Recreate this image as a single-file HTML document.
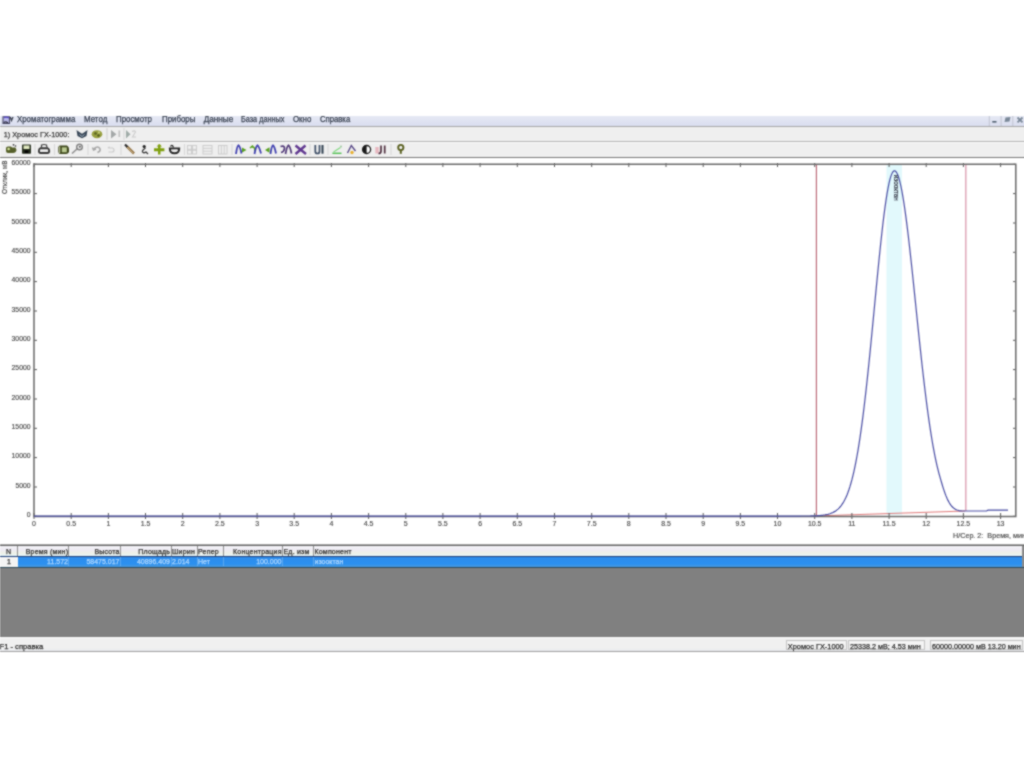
<!DOCTYPE html>
<html><head><meta charset="utf-8">
<style>
html,body{margin:0;padding:0;}
body{width:1024px;height:767px;background:#fff;position:relative;overflow:hidden;font-family:"Liberation Sans",sans-serif;}
#w{position:absolute;left:0;top:0;width:1024px;height:767px;filter:url(#bl);}
.a{position:absolute;}
.t{position:absolute;white-space:nowrap;font-size:8px;color:#303030;line-height:10px;-webkit-text-stroke:0.25px currentColor;}
svg text{stroke:currentColor;stroke-width:0.15px;fill:currentColor}
</style></head><body><svg width="0" height="0" style="position:absolute"><filter id="bl" x="0" y="0" width="1" height="1" color-interpolation-filters="sRGB"><feConvolveMatrix order="3" kernelMatrix="1 2 1 2 8 2 1 2 1" divisor="20" edgeMode="duplicate"/></filter></svg><div id="w">
<div class="a" style="left:0;top:116px;width:1024px;height:10px;background:linear-gradient(#e6e9f4,#d9ddef);"></div>
<div class="a" style="left:0;top:126px;width:1024px;height:1px;background:#a8a8a8;"></div>
<div class="a" style="left:0;top:127px;width:1024px;height:14px;background:#efefef;"></div>
<div class="a" style="left:0;top:141px;width:1024px;height:1px;background:#b4b4b4;"></div>
<div class="a" style="left:0;top:142px;width:1024px;height:1px;background:#fafafa;"></div>
<div class="a" style="left:0;top:143px;width:1024px;height:14px;background:#efefef;"></div>
<div class="a" style="left:0;top:157px;width:1024px;height:1px;background:#7a7a7a;"></div>
<div class="t" style="left:17px;top:115.3px;font-size:8.2px;line-height:10px;color:#384050;transform:scaleX(0.96);transform-origin:0 0">Хроматограмма</div><div class="t" style="left:84.4px;top:115.3px;font-size:8.2px;line-height:10px;color:#384050;transform:scaleX(0.97);transform-origin:0 0">Метод</div><div class="t" style="left:115.9px;top:115.3px;font-size:8.2px;line-height:10px;color:#384050;transform:scaleX(0.96);transform-origin:0 0">Просмотр</div><div class="t" style="left:162px;top:115.3px;font-size:8.2px;line-height:10px;color:#384050;transform:scaleX(0.96);transform-origin:0 0">Приборы</div><div class="t" style="left:203.7px;top:115.3px;font-size:8.2px;line-height:10px;color:#384050;transform:scaleX(1.0);transform-origin:0 0">Данные</div><div class="t" style="left:241.1px;top:115.3px;font-size:8.2px;line-height:10px;color:#384050;transform:scaleX(0.89);transform-origin:0 0">База данных</div><div class="t" style="left:293px;top:115.3px;font-size:8.2px;line-height:10px;color:#384050;transform:scaleX(0.96);transform-origin:0 0">Окно</div><div class="t" style="left:320.2px;top:115.3px;font-size:8.2px;line-height:10px;color:#384050;transform:scaleX(0.94);transform-origin:0 0">Справка</div>
<div class="t" style="left:3.7px;top:129.5px;font-size:7.3px;color:#404040">1) Хромос ГХ-1000:</div>
<svg class="a" style="left:0;top:0" width="1024" height="160" viewBox="0 0 1024 160">
<!-- app icon -->
<path d="M3,116.8 L9.5,116.8 L9.5,123.5 L3,123.5 Z" fill="#b8b8e8" stroke="#4a4a68" stroke-width="1.1"/>
<path d="M4,117.5 Q6.5,116.5 9,118" stroke="#5848c8" stroke-width="1.4" fill="none"/>
<path d="M3.5,122.5 Q6,121 8,123" stroke="#303040" stroke-width="1.2" fill="none"/>
<path d="M10.3,117 L11.5,120.5 L13,117" stroke="#3a4050" stroke-width="1.3" fill="none"/>
<!-- MDI buttons -->
<rect x="988.8" y="116" width="1" height="10" fill="#c0c4d0"/>
<rect x="992.3" y="121" width="4.2" height="1.6" fill="#506070"/>
<rect x="1000.6" y="116" width="1" height="10" fill="#c0c4d0"/>
<path d="M1005.5,117.5 L1010.5,117 L1009.5,121.5 L1004.5,122 Z" fill="#7a8898"/>
<rect x="1012.3" y="116" width="1" height="10" fill="#c0c4d0"/>
<path d="M1017.5,117.5 L1022.5,122.3 M1022.5,117.5 L1017.5,122.3" stroke="#7a8898" stroke-width="1.8"/>
<!-- toolbar1 icons -->
<path d="M76.5,130 L80,132.5 L82,133.8 L84,132.5 L87.5,130 L86.5,136 L82,138.2 L77.5,136 Z" fill="#3a4858"/>
<path d="M79.5,134.5 L82,136.5 L84.5,134.5" stroke="#b8c8d8" stroke-width="0.8" fill="none"/>
<ellipse cx="97" cy="134.2" rx="5.3" ry="4" fill="#98a040"/><circle cx="95.5" cy="133.5" r="1.3" fill="#586020"/><circle cx="98.5" cy="135.5" r="1.2" fill="#505818"/><circle cx="99" cy="132.5" r="0.9" fill="#d0d890"/>
<rect x="106.5" y="128" width="1" height="12" fill="#d0d0d0"/>
<path d="M111,130 L116.5,134.3 L111,138.5 Z" fill="#a4a8a8"/><rect x="118.5" y="130.5" width="1.6" height="6.5" fill="#c0c0c0"/>
<rect x="123.5" y="128" width="1" height="12" fill="#d8d8d8"/>
<path d="M126,130 L130.5,134.3 L126,138.5 Z" fill="#a0aca8"/><path d="M132,131.5 Q135,130 135.5,132 L132.5,137 L136,137" stroke="#cccccc" stroke-width="1.1" fill="none"/>
<!-- toolbar2 icons -->
<path d="M6,148 Q6,146.5 8,146.5 L11,146.5 L12,147.5 L15.5,147.5 L16.5,150 Q16,153 13,153 L8,153 Q6,153 6,151 Z" fill="#56602a"/><circle cx="8.6" cy="149" r="1.3" fill="#d8e8a0"/><circle cx="13.5" cy="144.8" r="0.9" fill="#404040"/><circle cx="15.5" cy="146" r="0.8" fill="#303030"/>
<rect x="22" y="144.5" width="9" height="9.2" rx="0.8" fill="#283020"/><rect x="23.5" y="145.5" width="6" height="3.5" fill="#e0e8c0"/><rect x="24.5" y="150.5" width="4" height="2.5" fill="#000"/>
<rect x="34.5" y="144" width="1" height="11" fill="#d8d8d8"/>
<path d="M41.5,147.5 L41.5,145 Q44,144 46.5,145 L47,147.5" stroke="#404040" stroke-width="1.2" fill="none"/>
<path d="M40.2,148.3 L47.8,148.3 Q49.2,148.8 49.2,151 Q49.2,153 47.3,153 L40.7,153 Q38.9,153 38.9,151 Q38.9,148.8 40.2,148.3 Z" fill="none" stroke="#383838" stroke-width="1.9"/>
<rect x="40.5" y="150.5" width="7" height="0.9" fill="#e8e8e8"/>
<rect x="54" y="144" width="1" height="11" fill="#d8d8d8"/>
<path d="M60,145.5 L67,145.5 Q69,146.5 69,149 L69,152 Q68,154 66,154 L60,154 Q58.3,153.5 58.3,151.5 L58.3,147.5 Q58.5,145.5 60,145.5 Z" fill="#3c461a"/><rect x="61.8" y="147.3" width="5" height="5" fill="#b8c890"/><rect x="59.2" y="146.5" width="1" height="6.5" fill="#d0d8b0"/>
<path d="M72,153.5 L77.5,148.5" stroke="#909090" stroke-width="1.6"/><circle cx="79.5" cy="147" r="2.8" fill="none" stroke="#808080" stroke-width="1.4"/><circle cx="79.8" cy="146.8" r="1" fill="#606060"/>
<rect x="87.5" y="144" width="1" height="11" fill="#d8d8d8"/>
<path d="M92.5,147.5 L93.5,150 L96,149 M93.5,149.5 Q96,146 99,147.5 Q101,149 99.5,151.5 L97.5,152.5" stroke="#a8a8a8" stroke-width="1.5" fill="none"/>
<path d="M108,148 L112.5,148 Q114,148.5 114,150 Q114,152 112,152 L108.5,152 M108,148 L109.5,146.8" stroke="#cccccc" stroke-width="1.2" fill="none"/>
<rect x="120.5" y="144" width="1" height="11" fill="#d8d8d8"/>
<path d="M127,146.5 L134,153.5" stroke="#9a7c50" stroke-width="2.6"/><path d="M125,144.5 L127.5,147" stroke="#282828" stroke-width="2.2"/><path d="M127,147 L133,153" stroke="#d8c090" stroke-width="0.6"/>
<circle cx="144.2" cy="146.5" r="1.6" fill="#202020"/><path d="M145.5,148 Q142,150 142.5,152 Q143.5,153.5 146,152 L148,154" stroke="#383838" stroke-width="1.3" fill="none"/>
<path d="M158,144.7 L160.5,144.7 L160.5,148.3 L164.4,148.3 L164.4,151.2 L160.5,151.2 L160.5,154.6 L158,154.6 L158,151.2 L154,151.2 L154,148.3 L158,148.3 Z" fill="#80a010"/><path d="M156.5,146.5 L159.2,144 L162,146.5 Z" fill="#80a010"/>
<path d="M169.8,148.5 Q169.8,153.3 174.5,153.3 Q179.2,153.3 179.2,148.5 Z" fill="none" stroke="#282828" stroke-width="1.9"/><path d="M170.5,146.5 Q171,145 172.5,145.5 L173.5,147.5" stroke="#303030" stroke-width="1.3" fill="none"/><path d="M171.5,150 L177,149.5" stroke="#d0d0d0" stroke-width="0.8"/>
<rect x="184" y="144" width="1" height="11" fill="#d8d8d8"/>
<g stroke="#cacaca" stroke-width="0.9" fill="none">
<rect x="187.5" y="145.5" width="9" height="8.5"/><path d="M191.5,145.5 V154 M192.5,145.5 V154 M187.5,149.3 H196.5 M187.5,150.3 H196.5"/>
<rect x="203" y="145.5" width="9" height="8.5"/><path d="M203,148.3 H212 M203,151.2 H212"/>
<rect x="218.5" y="145.5" width="8.5" height="8.5"/><path d="M221.3,145.5 V154 M224.2,145.5 V154"/>
</g>
<rect x="231.5" y="144" width="1" height="11" fill="#d8d8d8"/>
<path d="M236,154 Q237,146 238.5,145.2 Q240,146 241.5,153.5" stroke="#4040b0" stroke-width="1.8" fill="none"/><path d="M242,147.5 L246.5,150 L242,152.5 Z" fill="#58a020"/>
<path d="M250,148 L253,145.5 M251,147 Q255,146 255,151" stroke="#58a020" stroke-width="1.6" fill="none"/><path d="M254.5,154 Q256,146 257.5,145.2 Q259,146 261,153.5" stroke="#4040b0" stroke-width="1.8" fill="none"/>
<path d="M265,150 L269.5,147.3 L269.5,152.7 Z" fill="#58a020"/><path d="M270.5,154 Q271.5,146 273,145.2 Q274.5,146 276,153.5" stroke="#4040b0" stroke-width="1.8" fill="none"/>
<path d="M280.5,146.5 Q284.5,145 284.5,148.5 Q284,152 281,152.5 M285.5,154 Q287,146 288.5,145.2 Q290,146 291.5,153.5" stroke="#503878" stroke-width="1.7" fill="none"/>
<path d="M295.5,145.5 L306,154 M305.5,145.5 L295.5,154" stroke="#603890" stroke-width="2.4"/>
<rect x="309.5" y="144" width="1" height="11" fill="#d8d8d8"/>
<path d="M315.3,145 L315.3,151.5 Q315.3,153.5 317.5,153.5 Q319.5,153.5 319.5,151.5 L319.5,145" stroke="#405068" stroke-width="1.7" fill="none"/><path d="M322.5,145 V153.7" stroke="#304050" stroke-width="2"/>
<rect x="327.5" y="144" width="1" height="11" fill="#d8d8d8"/>
<path d="M332.4,153.3 L341.5,153.3" stroke="#50c050" stroke-width="1.4"/><path d="M333.5,152 L340.5,147.5" stroke="#80d880" stroke-width="1.1"/><circle cx="341" cy="146.5" r="1" fill="#a0c8a0"/>
<path d="M347.5,153 L351.3,145.5 L355.5,151" stroke="#5a4a88" stroke-width="1.4" fill="none"/><circle cx="352" cy="152.5" r="1.7" fill="#e8b030"/>
<circle cx="366.6" cy="149.5" r="4" fill="#ffffff" stroke="#181818" stroke-width="1.3"/><path d="M366.6,145.5 A4,4 0 0 0 366.6,153.5 Z" fill="#181818"/>
<rect x="375.3" y="147" width="3.5" height="6.5" fill="#e8b8c0"/><path d="M378.5,153.5 Q381,153.5 381,151 L381,145.5 M384.7,145.5 V153.5" stroke="#503040" stroke-width="1.7" fill="none"/>
<rect x="390.5" y="144" width="1" height="11" fill="#d8d8d8"/>
<circle cx="400.8" cy="147.5" r="2.6" fill="none" stroke="#5a6020" stroke-width="1.9"/><path d="M400.8,150 V153.8" stroke="#5a6020" stroke-width="2"/>
</svg>

<svg class="a" style="left:0;top:0" width="1024" height="767" viewBox="0 0 1024 767">
<rect x="886.5" y="165" width="15.5" height="350" fill="#e2f9fc"/>
<line x1="816.4" y1="165" x2="816.4" y2="516" stroke="#b86070" stroke-width="1.1"/>
<line x1="965.8" y1="165" x2="965.8" y2="511" stroke="#e0a8ba" stroke-width="1.5"/>
<path d="M815,516 L965,511" stroke="#e07a7a" stroke-width="1.1" fill="none"/>
<g stroke="#5a5a5a" stroke-width="1"><line x1="34" y1="516.3" x2="37" y2="516.3"/><line x1="1013" y1="516.3" x2="1016" y2="516.3"/><line x1="34" y1="487.0" x2="37" y2="487.0"/><line x1="1013" y1="487.0" x2="1016" y2="487.0"/><line x1="34" y1="457.6" x2="37" y2="457.6"/><line x1="1013" y1="457.6" x2="1016" y2="457.6"/><line x1="34" y1="428.3" x2="37" y2="428.3"/><line x1="1013" y1="428.3" x2="1016" y2="428.3"/><line x1="34" y1="399.0" x2="37" y2="399.0"/><line x1="1013" y1="399.0" x2="1016" y2="399.0"/><line x1="34" y1="369.6" x2="37" y2="369.6"/><line x1="1013" y1="369.6" x2="1016" y2="369.6"/><line x1="34" y1="340.3" x2="37" y2="340.3"/><line x1="1013" y1="340.3" x2="1016" y2="340.3"/><line x1="34" y1="311.0" x2="37" y2="311.0"/><line x1="1013" y1="311.0" x2="1016" y2="311.0"/><line x1="34" y1="281.6" x2="37" y2="281.6"/><line x1="1013" y1="281.6" x2="1016" y2="281.6"/><line x1="34" y1="252.3" x2="37" y2="252.3"/><line x1="1013" y1="252.3" x2="1016" y2="252.3"/><line x1="34" y1="223.0" x2="37" y2="223.0"/><line x1="1013" y1="223.0" x2="1016" y2="223.0"/><line x1="34" y1="193.6" x2="37" y2="193.6"/><line x1="1013" y1="193.6" x2="1016" y2="193.6"/><line x1="34" y1="164.3" x2="37" y2="164.3"/><line x1="1013" y1="164.3" x2="1016" y2="164.3"/><line x1="34.0" y1="513" x2="34.0" y2="519"/><line x1="34.0" y1="163" x2="34.0" y2="167"/><line x1="71.2" y1="513" x2="71.2" y2="519"/><line x1="71.2" y1="163" x2="71.2" y2="167"/><line x1="108.4" y1="513" x2="108.4" y2="519"/><line x1="108.4" y1="163" x2="108.4" y2="167"/><line x1="145.5" y1="513" x2="145.5" y2="519"/><line x1="145.5" y1="163" x2="145.5" y2="167"/><line x1="182.7" y1="513" x2="182.7" y2="519"/><line x1="182.7" y1="163" x2="182.7" y2="167"/><line x1="219.9" y1="513" x2="219.9" y2="519"/><line x1="219.9" y1="163" x2="219.9" y2="167"/><line x1="257.1" y1="513" x2="257.1" y2="519"/><line x1="257.1" y1="163" x2="257.1" y2="167"/><line x1="294.2" y1="513" x2="294.2" y2="519"/><line x1="294.2" y1="163" x2="294.2" y2="167"/><line x1="331.4" y1="513" x2="331.4" y2="519"/><line x1="331.4" y1="163" x2="331.4" y2="167"/><line x1="368.6" y1="513" x2="368.6" y2="519"/><line x1="368.6" y1="163" x2="368.6" y2="167"/><line x1="405.8" y1="513" x2="405.8" y2="519"/><line x1="405.8" y1="163" x2="405.8" y2="167"/><line x1="442.9" y1="513" x2="442.9" y2="519"/><line x1="442.9" y1="163" x2="442.9" y2="167"/><line x1="480.1" y1="513" x2="480.1" y2="519"/><line x1="480.1" y1="163" x2="480.1" y2="167"/><line x1="517.3" y1="513" x2="517.3" y2="519"/><line x1="517.3" y1="163" x2="517.3" y2="167"/><line x1="554.5" y1="513" x2="554.5" y2="519"/><line x1="554.5" y1="163" x2="554.5" y2="167"/><line x1="591.7" y1="513" x2="591.7" y2="519"/><line x1="591.7" y1="163" x2="591.7" y2="167"/><line x1="628.8" y1="513" x2="628.8" y2="519"/><line x1="628.8" y1="163" x2="628.8" y2="167"/><line x1="666.0" y1="513" x2="666.0" y2="519"/><line x1="666.0" y1="163" x2="666.0" y2="167"/><line x1="703.2" y1="513" x2="703.2" y2="519"/><line x1="703.2" y1="163" x2="703.2" y2="167"/><line x1="740.4" y1="513" x2="740.4" y2="519"/><line x1="740.4" y1="163" x2="740.4" y2="167"/><line x1="777.5" y1="513" x2="777.5" y2="519"/><line x1="777.5" y1="163" x2="777.5" y2="167"/><line x1="814.7" y1="513" x2="814.7" y2="519"/><line x1="814.7" y1="163" x2="814.7" y2="167"/><line x1="851.9" y1="513" x2="851.9" y2="519"/><line x1="851.9" y1="163" x2="851.9" y2="167"/><line x1="889.1" y1="513" x2="889.1" y2="519"/><line x1="889.1" y1="163" x2="889.1" y2="167"/><line x1="926.2" y1="513" x2="926.2" y2="519"/><line x1="926.2" y1="163" x2="926.2" y2="167"/><line x1="963.4" y1="513" x2="963.4" y2="519"/><line x1="963.4" y1="163" x2="963.4" y2="167"/><line x1="1000.6" y1="513" x2="1000.6" y2="519"/><line x1="1000.6" y1="163" x2="1000.6" y2="167"/></g>
<path d="M34,164.3 H1015.8 V516.5 H34 Z" stroke="#6a6a6a" stroke-width="1.5" fill="none"/>
<path d="M34.0,516.2 L800.0,516.2 L800.0,516.0 L801.0,516.0 L802.0,516.0 L803.0,516.0 L804.0,516.0 L805.0,516.0 L806.0,516.0 L807.0,516.0 L808.0,516.0 L809.0,516.0 L810.0,516.0 L811.0,515.9 L812.0,515.9 L813.0,515.9 L814.0,515.9 L815.0,515.9 L816.0,515.8 L817.0,515.8 L818.0,515.7 L819.0,515.6 L820.0,515.5 L821.0,515.4 L822.0,515.3 L823.0,515.2 L824.0,515.0 L825.0,514.9 L826.0,514.7 L827.0,514.5 L828.0,514.3 L829.0,514.0 L830.0,513.7 L831.0,513.3 L832.0,512.9 L833.0,512.5 L834.0,511.9 L835.0,511.4 L836.0,510.7 L837.0,509.9 L838.0,509.1 L839.0,508.1 L840.0,507.0 L841.0,505.8 L842.0,504.4 L843.0,502.9 L844.0,501.2 L845.0,499.3 L846.0,497.2 L847.0,494.9 L848.0,492.3 L849.0,489.5 L850.0,486.4 L851.0,483.0 L852.0,479.4 L853.0,475.4 L854.0,471.1 L855.0,466.4 L856.0,461.4 L857.0,456.0 L858.0,450.3 L859.0,444.1 L860.0,437.6 L861.0,430.7 L862.0,423.4 L863.0,415.8 L864.0,407.7 L865.0,399.3 L866.0,390.6 L867.0,381.5 L868.0,372.1 L869.0,362.5 L870.0,352.6 L871.0,342.5 L872.0,332.3 L873.0,321.9 L874.0,311.5 L875.0,301.0 L876.0,290.6 L877.0,280.2 L878.0,270.0 L879.0,260.0 L880.0,250.2 L881.0,240.7 L882.0,231.7 L883.0,223.0 L884.0,214.9 L885.0,207.3 L886.0,200.3 L887.0,193.9 L888.0,188.3 L889.0,183.4 L890.0,179.2 L891.0,175.9 L892.0,173.4 L893.0,171.7 L894.0,170.9 L895.0,170.9 L896.0,171.7 L897.0,173.3 L898.0,175.5 L899.0,178.5 L900.0,182.3 L901.0,186.6 L902.0,191.7 L903.0,197.3 L904.0,203.6 L905.0,210.3 L906.0,217.6 L907.0,225.4 L908.0,233.5 L909.0,242.0 L910.0,250.9 L911.0,260.0 L912.0,269.3 L913.0,278.8 L914.0,288.4 L915.0,298.1 L916.0,307.8 L917.0,317.5 L918.0,327.1 L919.0,336.7 L920.0,346.1 L921.0,355.4 L922.0,364.5 L923.0,373.3 L924.0,381.9 L925.0,390.3 L926.0,398.3 L927.0,406.1 L928.0,413.5 L929.0,420.6 L930.0,427.4 L931.0,433.9 L932.0,440.0 L933.0,445.8 L934.0,451.2 L935.0,456.3 L936.0,461.1 L937.0,465.6 L938.0,469.7 L939.0,473.6 L940.0,477.2 L941.0,480.6 L942.0,484.0 L943.0,487.3 L944.0,490.4 L945.0,493.3 L946.0,495.9 L947.0,498.3 L948.0,500.4 L949.0,502.3 L950.0,503.9 L951.0,505.3 L952.0,506.5 L953.0,507.5 L954.0,508.3 L955.0,509.0 L956.0,509.6 L957.0,510.0 L958.0,510.3 L959.0,510.6 L960.0,510.8 L961.0,510.9 L962.0,511.0 L963.0,511.0 L964.0,511.0 L965.0,511.0 L966.0,511.0 L986.5,511.0 L988.0,510.2 L1008.0,510.2" stroke="#4a4ea4" stroke-width="1.2" fill="none"/>
<g font-family="Liberation Sans" font-size="6.8" style="color:#4a4a4a"><text x="30.5" y="516.9" text-anchor="end">0</text><text x="30.5" y="487.6" text-anchor="end">5000</text><text x="30.5" y="458.2" text-anchor="end">10000</text><text x="30.5" y="428.9" text-anchor="end">15000</text><text x="30.5" y="399.6" text-anchor="end">20000</text><text x="30.5" y="370.2" text-anchor="end">25000</text><text x="30.5" y="340.9" text-anchor="end">30000</text><text x="30.5" y="311.6" text-anchor="end">35000</text><text x="30.5" y="282.2" text-anchor="end">40000</text><text x="30.5" y="252.9" text-anchor="end">45000</text><text x="30.5" y="223.6" text-anchor="end">50000</text><text x="30.5" y="194.2" text-anchor="end">55000</text><text x="30.5" y="164.9" text-anchor="end">60000</text></g>
<g font-family="Liberation Sans" font-size="7" style="color:#4a4a4a"><text x="34.0" y="525.9" text-anchor="middle">0</text><text x="71.2" y="525.9" text-anchor="middle">0.5</text><text x="108.4" y="525.9" text-anchor="middle">1</text><text x="145.5" y="525.9" text-anchor="middle">1.5</text><text x="182.7" y="525.9" text-anchor="middle">2</text><text x="219.9" y="525.9" text-anchor="middle">2.5</text><text x="257.1" y="525.9" text-anchor="middle">3</text><text x="294.2" y="525.9" text-anchor="middle">3.5</text><text x="331.4" y="525.9" text-anchor="middle">4</text><text x="368.6" y="525.9" text-anchor="middle">4.5</text><text x="405.8" y="525.9" text-anchor="middle">5</text><text x="442.9" y="525.9" text-anchor="middle">5.5</text><text x="480.1" y="525.9" text-anchor="middle">6</text><text x="517.3" y="525.9" text-anchor="middle">6.5</text><text x="554.5" y="525.9" text-anchor="middle">7</text><text x="591.7" y="525.9" text-anchor="middle">7.5</text><text x="628.8" y="525.9" text-anchor="middle">8</text><text x="666.0" y="525.9" text-anchor="middle">8.5</text><text x="703.2" y="525.9" text-anchor="middle">9</text><text x="740.4" y="525.9" text-anchor="middle">9.5</text><text x="777.5" y="525.9" text-anchor="middle">10</text><text x="814.7" y="525.9" text-anchor="middle">10.5</text><text x="851.9" y="525.9" text-anchor="middle">11</text><text x="889.1" y="525.9" text-anchor="middle">11.5</text><text x="926.2" y="525.9" text-anchor="middle">12</text><text x="963.4" y="525.9" text-anchor="middle">12.5</text><text x="1000.6" y="525.9" text-anchor="middle">13</text></g>
<text x="953" y="537.8" font-family="Liberation Sans" font-size="7.2" style="white-space:pre;color:#484848">Н/Сер. 2:  Время, мин</text>
<text transform="translate(6.6,194) rotate(-90)" font-family="Liberation Sans" font-size="6.5" style="color:#404040">Отклик, мВ</text>
<text transform="translate(893.8,174.8) rotate(90)" font-family="Liberation Sans" font-size="6.3" style="color:#202030">изооктан</text>
</svg>
<div class="a" style="left:0;top:544px;width:1024px;height:1px;background:#a8a8a8;"></div><div class="a" style="left:0;top:545px;width:1024px;height:1px;background:#686868;"></div>
<div class="a" style="left:0;top:546px;width:1022px;height:10px;background:linear-gradient(#f2f2f6,#eeebf4 40%,#eef0e6 70%,#e6f4f8);"></div>
<div class="a" style="left:0;top:556px;width:1022px;height:1px;background:#20407a;"></div>
<div class="a" style="left:18px;top:557px;width:1004px;height:10px;background:linear-gradient(#2e8cea,#2b90f0 70%,#4a98dc);"></div>
<div class="a" style="left:0;top:557px;width:18px;height:10px;background:#f4f4f4;"></div>
<div class="a" style="left:17px;top:546px;width:1px;height:9.5px;background:#909090;"></div><div class="a" style="left:68px;top:546px;width:1px;height:9.5px;background:#909090;"></div><div class="a" style="left:120px;top:546px;width:1px;height:9.5px;background:#909090;"></div><div class="a" style="left:171px;top:546px;width:1px;height:9.5px;background:#909090;"></div><div class="a" style="left:197px;top:546px;width:1px;height:9.5px;background:#909090;"></div><div class="a" style="left:223px;top:546px;width:1px;height:9.5px;background:#909090;"></div><div class="a" style="left:282px;top:546px;width:1px;height:9.5px;background:#909090;"></div><div class="a" style="left:313px;top:546px;width:1px;height:9.5px;background:#909090;"></div><div class="t" style="left:0px;top:547px;width:17.2px;text-align:center;font-size:7px;letter-spacing:0.2px;line-height:10px;color:#303030;overflow:hidden">N</div><div class="t" style="left:18px;top:547px;width:50.2px;text-align:right;font-size:7px;letter-spacing:0.2px;line-height:10px;color:#303030;overflow:hidden">Время (мин)</div><div class="t" style="left:69px;top:547px;width:50.7px;text-align:right;font-size:7px;letter-spacing:0.2px;line-height:10px;color:#303030;overflow:hidden">Высота</div><div class="t" style="left:121px;top:547px;width:49.2px;text-align:right;font-size:7px;letter-spacing:0.2px;line-height:10px;color:#303030;overflow:hidden">Площадь</div><div class="t" style="left:172px;top:547px;width:25.2px;text-align:left;font-size:7px;letter-spacing:0.2px;line-height:10px;color:#303030;overflow:hidden">Ширин</div><div class="t" style="left:198px;top:547px;width:24.7px;text-align:left;font-size:7px;letter-spacing:0.2px;line-height:10px;color:#303030;overflow:hidden">Репер</div><div class="t" style="left:224px;top:547px;width:57.7px;text-align:right;font-size:7px;letter-spacing:0.2px;line-height:10px;color:#303030;overflow:hidden">Концентрация</div><div class="t" style="left:283.5px;top:547px;width:29.7px;text-align:left;font-size:7px;letter-spacing:0.2px;line-height:10px;color:#303030;overflow:hidden">Ед. изм</div><div class="t" style="left:314.5px;top:547px;width:85.7px;text-align:left;font-size:7px;letter-spacing:0.2px;line-height:10px;color:#303030;overflow:hidden">Компонент</div><div class="t" style="left:18px;top:556.5px;width:50px;text-align:right;font-size:7px;line-height:10px;color:#b0d8ff;overflow:hidden">11.572</div><div class="t" style="left:69px;top:556.5px;width:50.5px;text-align:right;font-size:7px;line-height:10px;color:#b0d8ff;overflow:hidden">58475.017</div><div class="t" style="left:121px;top:556.5px;width:49px;text-align:right;font-size:7px;line-height:10px;color:#b0d8ff;overflow:hidden">40896.409</div><div class="t" style="left:172px;top:556.5px;width:25px;text-align:left;font-size:7px;line-height:10px;color:#b0d8ff;overflow:hidden">2.014</div><div class="t" style="left:198px;top:556.5px;width:24.5px;text-align:left;font-size:7px;line-height:10px;color:#b0d8ff;overflow:hidden">Нет</div><div class="t" style="left:224px;top:556.5px;width:57.5px;text-align:right;font-size:7px;line-height:10px;color:#b0d8ff;overflow:hidden">100.000</div><div class="t" style="left:283.5px;top:556.5px;width:29.5px;text-align:left;font-size:7px;line-height:10px;color:#b0d8ff;overflow:hidden"></div><div class="t" style="left:314.5px;top:556.5px;width:85.5px;text-align:left;font-size:7px;line-height:10px;color:#b0d8ff;overflow:hidden">изооктан</div><div class="t" style="left:0;top:556.5px;width:18px;text-align:center;font-size:7px;line-height:10px;color:#303030">1</div><div class="a" style="left:68px;top:557px;width:1px;height:9px;background:#7ab8f0;opacity:.6"></div><div class="a" style="left:120px;top:557px;width:1px;height:9px;background:#7ab8f0;opacity:.6"></div><div class="a" style="left:171px;top:557px;width:1px;height:9px;background:#7ab8f0;opacity:.6"></div><div class="a" style="left:197px;top:557px;width:1px;height:9px;background:#7ab8f0;opacity:.6"></div><div class="a" style="left:223px;top:557px;width:1px;height:9px;background:#7ab8f0;opacity:.6"></div><div class="a" style="left:282px;top:557px;width:1px;height:9px;background:#7ab8f0;opacity:.6"></div><div class="a" style="left:313px;top:557px;width:1px;height:9px;background:#7ab8f0;opacity:.6"></div>
<div class="a" style="left:1022px;top:546px;width:2px;height:21px;background:#8c8c8c;"></div>
<div class="a" style="left:0;top:567px;width:1024px;height:70px;background:#808080;"></div>
<div class="a" style="left:0;top:567px;width:1024px;height:1px;background:#2e4a5a;"></div>
<div class="a" style="left:0;top:637px;width:1024px;height:14px;background:linear-gradient(#fbfbfb,#f0f0f0 2px,#f0f0f0 11px,#e8eaee);"></div>
<div class="a" style="left:0;top:651px;width:1024px;height:1px;background:#a0a0a0;"></div>
<div class="t" style="left:-0.5px;top:641.5px;font-size:7.6px;color:#303030">F1 - справка</div>
<div class="a" style="left:785.9px;top:640px;width:61px;height:10px;border:0.5px solid #c4c4c4;background:#f4f4f4;box-sizing:border-box"></div>
<div class="a" style="left:847.5px;top:640px;width:77px;height:10px;border:0.5px solid #c4c4c4;background:#f4f4f4;box-sizing:border-box"></div>
<div class="a" style="left:929.6px;top:640.5px;width:1.4px;height:9.5px;background:#a0a0a0"></div><div class="a" style="left:929.5px;top:640px;width:93px;height:10px;border:0.5px solid #c4c4c4;background:#f4f4f4;box-sizing:border-box"></div>
<div class="t" style="left:787.8px;top:642.3px;font-size:7.4px;color:#303030">Хромос ГХ-1000</div>
<div class="t" style="left:850px;top:642.3px;font-size:7.2px;color:#303030">25338.2 мВ; 4.53 мин</div>
<div class="t" style="left:932px;top:642.3px;font-size:7.2px;color:#303030">60000.00000 мВ 13.20 мин</div>
</div></body></html>
